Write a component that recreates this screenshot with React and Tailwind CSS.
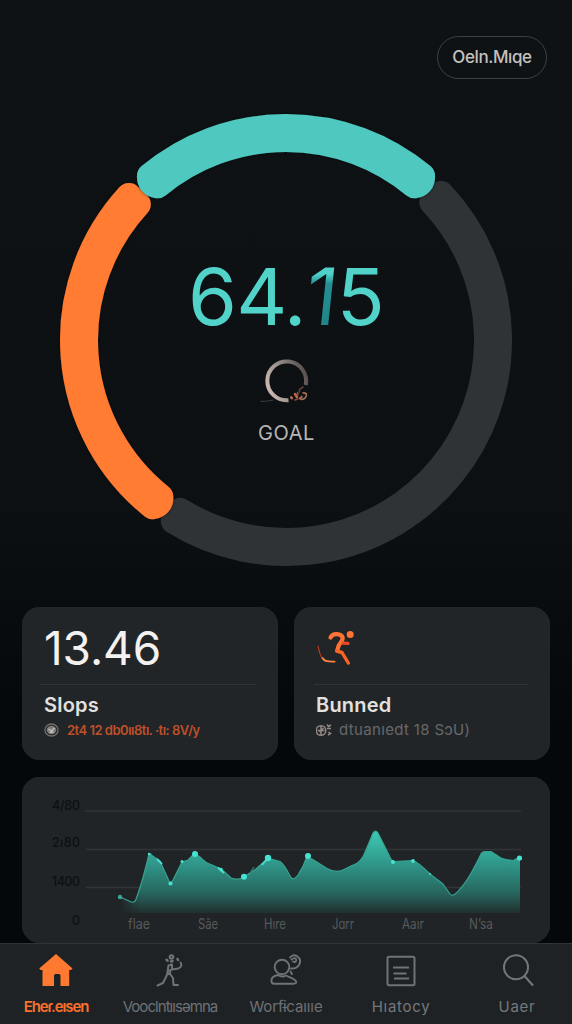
import React from "react";

const CX = 228;
const CY = 228;

function point(radius, degrees) {
  const a = (degrees * Math.PI) / 180;
  return `${(CX + radius * Math.sin(a)).toFixed(2)} ${(CY - radius * Math.cos(a)).toFixed(2)}`;
}

// Annular sector; the 26px round-joined stroke softens its corners and
// startBulge / endBulge (degrees) push the end edges outwards.
function sector(from, to, startBulge, endBulge) {
  const large = to - from > 180 ? 1 : 0;
  return `M${point(213, from)} A213 213 0 ${large} 1 ${point(213, to)} Q${point(207, to + endBulge)} ${point(201, to)} A201 201 0 ${large} 0 ${point(201, from)} Q${point(207, from - startBulge)} ${point(213, from)} Z`;
}

function Segment({ from, to, color, shadow, startBulge = 0, endBulge = 0 }) {
  return (
    <path
      d={sector(from, to, startBulge, endBulge)}
      fill={color}
      stroke={color}
      strokeWidth="26"
      strokeLinejoin="round"
      filter={shadow ? "url(#segmentShadow)" : undefined}
    />
  );
}

function GoalIcon() {
  return (
    <svg width="52" height="48" viewBox="0 0 52 48" fill="none" strokeLinecap="round">
      <defs>
        <linearGradient id="goalRing" x1="0" y1="0.7" x2="1" y2="0.3">
          <stop offset="0" stopColor="#cbb9b0" />
          <stop offset="0.55" stopColor="#8d8582" />
          <stop offset="1" stopColor="#57504e" />
        </linearGradient>
      </defs>
      <path d="M28.5 42.2 A19.4 19.4 0 1 1 45.7 27" stroke="url(#goalRing)" strokeWidth="4" strokeLinecap="butt" />
      <path d="M1 43.3 L8 43 L13 42" stroke="#3b3d3e" strokeWidth="1.2" />
      <path d="M43 29 L39.5 31.5 L39.5 34" stroke="#5e4238" strokeWidth="1.6" />
      <path d="M43 35 Q47 34.5 46.3 38 C45 41.5 41 42 39.5 40.5 L42 38.5" stroke="#a76e58" strokeWidth="1.7" />
      <path d="M31.3 39.3 L31.8 40.2 M35 36 L37 39" stroke="#bd6748" strokeWidth="2.6" />
      <path d="M37.5 34.5 L38 36.5 M35 42 L37.5 41" stroke="#8e4d38" strokeWidth="1.6" />
    </svg>
  );
}

function Ring() {
  return (
    <section className="mx-auto mt-[33px] grid size-[456px] place-items-center">
      <svg className="col-start-1 row-start-1" width="456" height="456" viewBox="0 0 456 456">
        <defs>
          <filter id="segmentShadow" filterUnits="userSpaceOnUse" x="-10" y="-10" width="476" height="476">
            <feDropShadow dx="0" dy="0" stdDeviation="1.6" floodColor="#000000" floodOpacity="0.6" />
          </filter>
        </defs>
        <Segment from={46.7} to={211.8} color="#303336" />
        <Segment from={218.7} to={312.5} color="#ff7b32" startBulge={1.5} shadow />
        <Segment from={-39.7} to={39.7} color="#50c9c0" startBulge={1.5} endBulge={1.5} shadow />
      </svg>
      <div className="col-start-1 row-start-1 flex flex-col items-center pt-[21px]">
        <div className="flex h-20 items-center text-[79px] leading-none tracking-[-0.9px] text-[#52d3ca]">
          <span>64.</span>
          <span className="-skew-x-6 bg-linear-to-b from-[#4fd0c8] from-22% via-[#238f93] via-34% to-[#1f8286] bg-clip-text text-transparent">1</span>
          <span>5</span>
        </div>
        <div className="mt-[22px]"><GoalIcon /></div>
        <div className="mt-[15px] pl-px text-[20px] leading-6 tracking-[0.6px] text-[#b7b5b2]">GOAL</div>
      </div>
    </section>
  );
}

function RunnerIcon() {
  return (
    <svg className="ml-px" width="38" height="36" viewBox="0 0 38 36" fill="none" strokeLinecap="round" strokeLinejoin="round">
      <circle cx="33.2" cy="4.6" r="3.5" fill="#ff7434" />
      <path d="M13.5 7.5 C15 4.8 17 4 20 4.2 C26 4.6 27 8.5 24 12 C22 14.5 21 16 20.5 19.5" stroke="#ff7434" strokeWidth="4.2" />
      <path d="M26 13.2 L31 13.4" stroke="#ee4823" strokeWidth="3.2" />
      <path d="M19.5 21 L25 22.5 L31.3 33" stroke="#fb6226" strokeWidth="3.4" />
      <path d="M1 16 C2.5 24.5 4.5 29.5 8.5 31" stroke="#c93e1e" strokeWidth="1.1" />
      <path d="M5.5 28 C7.5 31.5 11 31.8 17.5 31.6" stroke="#ff8440" strokeWidth="1.9" />
    </svg>
  );
}

function DialIcon() {
  return (
    <svg width="16" height="14" viewBox="0 0 16 14" fill="none">
      <ellipse cx="7.5" cy="7" rx="6.6" ry="6" stroke="#716d6b" strokeWidth="1.3" />
      <ellipse cx="7.5" cy="7" rx="4.8" ry="4.2" fill="#7e7c79" />
      <path d="M4.5 6 L7.5 8 L10.5 5 M5.5 9.5 L9.5 9" stroke="#c2bfbb" strokeWidth="1.4" />
    </svg>
  );
}

function BurnIcon() {
  return (
    <svg width="16" height="14" viewBox="0 0 16 14" fill="none" stroke="#928782" strokeWidth="1.5">
      <circle cx="5" cy="7.5" r="4.8" />
      <path d="M1.5 7.5 H8.5 M5 3 V12 M7.5 5 L3.5 9" />
      <path d="M11 1.5 L12.5 3.5 L15 2 M11 5.5 H15 M12.5 9 L14.5 10.5 L12 12" />
    </svg>
  );
}

function StatCard({ children, title, icon, note, noteClass, rule }) {
  return (
    <article className="flex h-[153px] flex-col rounded-[18px] bg-[#222528] px-[22px] shadow-[inset_0_0_1px_#33373a]">
      <div className="flex h-[77px] items-center pt-1">{children}</div>
      <div className={`border-t border-[#303437] ${rule}`} />
      <h2 className="mt-[8px] text-[20px] leading-6 font-semibold tracking-[0.2px] text-[#e3e1df]">{title}</h2>
      <div className="mt-[4px] flex items-center gap-[7px] whitespace-nowrap">
        {icon}
        <span className={noteClass}>{note}</span>
      </div>
    </article>
  );
}

const curve =
  "M120 897 L130 901.5 Q135 904 136.5 898 Q143 880 149 854 Q150 852.5 152 855.5 L160 861 L169 881 Q170.5 884 173 880 L182 862 L188 860 L194.5 853.5 L200 857 Q206 863.5 211 864.5 L221 869 Q226 873 231 878 Q237 880.5 243 877.5 L256 869 L268 858 L280 861.5 Q284 864 290 876 Q293 882 298 875 Q304 866 306.5 857.5 L312 859 L327 868.5 Q337 874 345 869 L352 865.5 Q361 864 366 850 L373 833 Q375.5 829 378 833 L389 855 Q391 861 394 861.5 L413 860.5 Q418 862 430 874 L443 884 L450 894 Q453 898 460 889 Q468 881 481 854 Q482 851.5 485 851.5 L491 851.5 L501 858 Q510 861 514 860 L520 857";

const months = [
  ["flae", 128, 22],
  ["Sãe", 198, 20],
  ["Hıre", 264, 22],
  ["Jɑrr", 332, 22],
  ["Aaır", 402, 22],
  ["Nʼsa", 469, 24],
];

const axis = [
  ["4/80", 52, 809.5, 28],
  ["2ı80", 52, 846.5, 28],
  ["1400", 52, 885.5, 28],
  ["0", 72, 925, 8.5],
];

const dots = [
  [120, 897, 2.2], [149, 854, 1.2], [170.5, 883.5, 2.1], [182, 861.5, 1.5], [195, 854, 3],
  [221, 869.5, 1.8], [244, 876.8, 3], [268, 858, 3.2], [308, 856, 3], [393, 862, 2],
  [413, 861, 1.9], [430, 874, 1], [519.5, 858, 2.6],
];

function Chart() {
  return (
    <section className="mx-[22px] mt-[17px] h-[166px] rounded-[18px] bg-[#212427] shadow-[inset_0_0_1px_#33373a]">
      <svg width="529" height="166" viewBox="22 777 529 166" fontFamily="Inter, sans-serif">
        <defs>
          <linearGradient id="area" gradientUnits="userSpaceOnUse" x1="0" y1="830" x2="0" y2="913">
            <stop offset="0" stopColor="#3fcab5" />
            <stop offset="0.35" stopColor="#319e90" />
            <stop offset="0.75" stopColor="#27675f" />
            <stop offset="1" stopColor="#21302f" />
          </linearGradient>
          <linearGradient id="leftFade" gradientUnits="userSpaceOnUse" x1="120" y1="0" x2="140" y2="0">
            <stop offset="0" stopColor="#fff" stopOpacity="0" />
            <stop offset="1" stopColor="#fff" />
          </linearGradient>
          <mask id="areaMask" maskUnits="userSpaceOnUse" x="110" y="820" width="420" height="100">
            <rect x="110" y="820" width="420" height="100" fill="url(#leftFade)" />
          </mask>
        </defs>
        <path d="M85 811 H521 M86 849.5 H521 M86 887.5 H521" stroke="#313538" strokeWidth="1.5" />
        <path d={`${curve} V913 H120 Z`} fill="#212427" />
        <path d={`${curve} V913 H120 Z`} fill="url(#area)" mask="url(#areaMask)" />
        <path d={curve} fill="none" stroke="#36a392" strokeWidth="1.2" strokeLinejoin="round" />
        <path d="M157 859 L162 864 M218 867.5 L224 873 M262 865 L268 858" stroke="#4be0cf" strokeWidth="1.8" />
        <path d="M250 873 L254 867" stroke="#357e75" strokeWidth="1.3" />
        {dots.map(([x, y, r]) => (
          <circle key={x} cx={x} cy={y} r={r} fill={x === 120 ? "#35a896" : "#46e3d2"} />
        ))}
        {axis.map(([label, x, y, w]) => (
          <text key={label} x={x} y={y} textLength={w} fontSize="12.5" fontWeight="500" fill="#0d0f11">{label}</text>
        ))}
        {months.map(([label, x, w]) => (
          <text key={label} x={x} y="928.5" textLength={w} lengthAdjust="spacingAndGlyphs" fontSize="14" fill="#56595b">{label}</text>
        ))}
      </svg>
    </section>
  );
}

function HomeIcon() {
  return (
    <svg width="36" height="36" viewBox="0 0 36 36">
      <path d="M18 2 L34.5 16.5 L33 18 H31.2 V34 H22.5 V23.5 Q22.5 22 21 22 H17.5 Q16 22 16 23.5 V34 H4.5 V18 H2.5 L1.2 16.5 Z" fill="#ff7931" />
    </svg>
  );
}

function WorkoutIcon() {
  return (
    <svg width="36" height="36" viewBox="0 0 36 36" fill="none" stroke="#707376" strokeWidth="2" strokeLinecap="round" strokeLinejoin="round">
      <circle cx="19.5" cy="5" r="1.8" />
      <path d="M14.5 7.8 L15.5 8.6 M25.5 7 L26 8 M19 9.5 L20.5 9" strokeWidth="2.6" />
      <path d="M20 12.5 L16.5 13.5 L15.5 20 M20 13 V17.5 L26.5 16.5 Q31 14 28.5 10.5" />
      <path d="M16.5 18 L14.5 24 L11 31 L5.5 33.5 M18.5 18 L18 22 L21 26 L21.5 33 H26 M15 22 H17.5" />
    </svg>
  );
}

function PeopleIcon() {
  return (
    <svg width="36" height="36" viewBox="0 0 36 36" fill="none" stroke="#707376" strokeWidth="1.9" strokeLinecap="round" strokeLinejoin="round">
      <circle cx="14" cy="15" r="7.3" />
      <path d="M10 23 C5 24 3.2 26 3.4 29 Q3.5 31.7 6 31.7 H25.5 Q29 31.7 28 29.5 C27 26.5 22 25.5 18 23.5 Q14 25.8 10 23" />
      <path d="M22 5.5 Q25 2 29 4.2 Q34 7.5 31 13 Q28.5 17 23 16.5 M23.5 7.5 Q28 4.5 28.2 8 Q28 11 25 9.5 M22.5 19.5 L24 22" />
    </svg>
  );
}

function HistoryIcon() {
  return (
    <svg width="36" height="36" viewBox="0 0 36 36" fill="none" stroke="#707376" strokeWidth="2">
      <rect x="4.5" y="4.7" width="27" height="28.5" rx="1.5" />
      <path d="M10 15.5 H26 M10.5 21.5 H23.5 M11 26.5 H26" />
    </svg>
  );
}

function SearchIcon() {
  return (
    <svg width="36" height="36" viewBox="0 0 36 36" fill="none" stroke="#74777a" strokeWidth="2" strokeLinecap="round">
      <circle cx="17" cy="15.3" r="12" />
      <path d="M25.5 24 L33.5 33" />
    </svg>
  );
}

const tabs = [
  { label: "Eheɾ.eısen", icon: <HomeIcon />, style: "text-[#f9702d] font-semibold tracking-[-1.1px]" },
  { label: "Vooclntıısəmna", icon: <WorkoutIcon />, style: "text-[#6e7174] tracking-[-0.95px]" },
  { label: "Worfɨcaıııe", icon: <PeopleIcon />, style: "text-[#6e7174] tracking-[-0.1px]" },
  { label: "Hıatocy", icon: <HistoryIcon />, style: "text-[#75787b] tracking-[0.7px]" },
  { label: "Uaer", icon: <SearchIcon />, style: "text-[#75787b] tracking-[0.7px]" },
];

export default function App() {
  return (
    <main className="flex h-[1024px] w-[572px] flex-col overflow-hidden bg-linear-to-b from-[#0e1215] via-[#0c1013] via-50% to-[#05080b] to-70% font-[Inter,sans-serif]">
      <header className="flex justify-end pt-9 pr-[25px]">
        <button className="flex h-[43px] w-[110px] items-center justify-center rounded-full border-[1.5px] border-[#3e4144] text-[17px] font-medium tracking-[-0.4px] text-[#c3c1bf]">
          Oeln.Mıqe
        </button>
      </header>

      <Ring />

      <section className="mt-[39px] grid grid-cols-2 gap-4 px-[22px]">
        <StatCard
          title="Slops"
          icon={<DialIcon />}
          note="2t4 12 db0ıı8tı. ·tı: 8V/y"
          noteClass="text-[13px] leading-[18px] font-semibold text-[#bd5028] tracking-[-0.5px]"
          rule="-ml-1"
        >
          <span className="text-[46px] leading-none tracking-[-0.1px] text-[#f4f2f0]">13.46</span>
        </StatCard>
        <StatCard
          title="Bunned"
          icon={<BurnIcon />}
          note="dtuanıedt 18 SɔU)"
          noteClass="text-[15px] leading-[18px] tracking-[0.35px] text-[#66696b]"
          rule="-ml-0.5"
        >
          <RunnerIcon />
        </StatCard>
      </section>

      <Chart />

      <nav className="grid h-[81px] shrink-0 grid-cols-[112px_116px_116px_114px_118px] border-t-[1.5px] border-[#303337] bg-[#1f2225] pt-[8px]">
        {tabs.map(({ label, icon, style }) => (
          <a key={label} className="flex flex-col items-center">
            {icon}
            <span className={`mt-[9px] text-[15px] leading-5 whitespace-nowrap ${style}`}>{label}</span>
          </a>
        ))}
      </nav>
    </main>
  );
}
